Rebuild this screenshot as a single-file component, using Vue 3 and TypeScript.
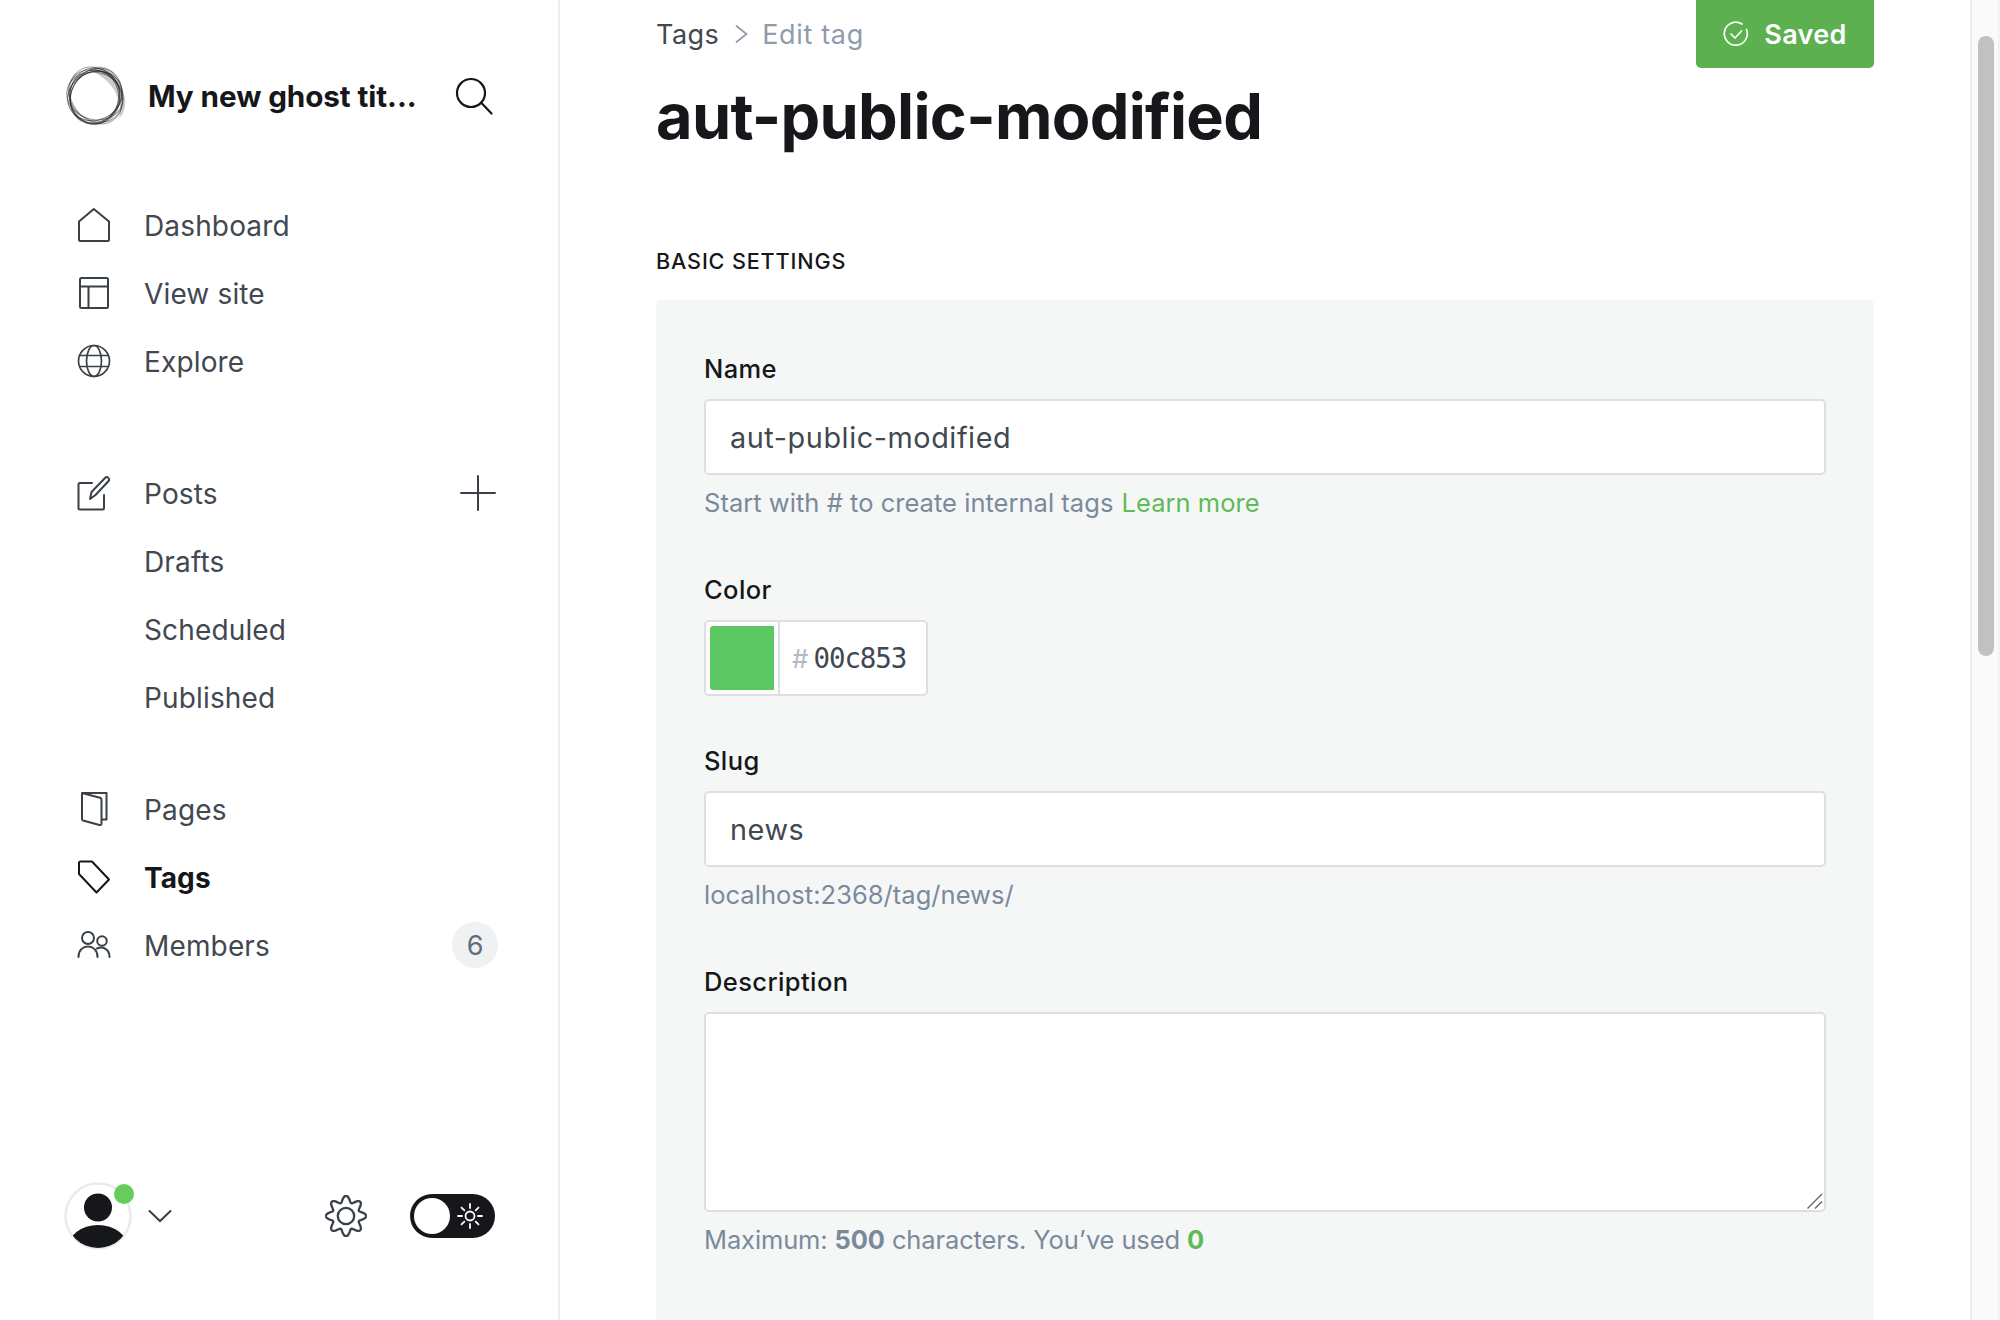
<script setup lang="ts">
interface NavItem { label: string; icon?: string; active?: boolean; plus?: boolean; badge?: string }
const groups: NavItem[][] = [
  [{ label: 'Dashboard', icon: 'home' }, { label: 'View site', icon: 'layout' }, { label: 'Explore', icon: 'globe' }],
  [{ label: 'Posts', icon: 'posts', plus: true }, { label: 'Drafts' }, { label: 'Scheduled' }, { label: 'Published' }],
  [{ label: 'Pages', icon: 'pages' }, { label: 'Tags', icon: 'tag', active: true }, { label: 'Members', icon: 'members', badge: '6' }],
]
const gearPath = (() => {
  const pts: string[] = []
  for (let i = 0; i < 160; i++) {
    const t = (i / 160) * Math.PI * 2
    const r = 16.2 + 3 * Math.cos(8 * t)
    pts.push(`${(20 + r * Math.sin(t)).toFixed(2)} ${(20 - r * Math.cos(t)).toFixed(2)}`)
  }
  return 'M' + pts.join('L') + 'Z'
})()
const rays = [0, 45, 90, 135, 180, 225, 270, 315]
const logoRings = [
  { rx: 28, ry: 24, a: -25, o: 0.6, cx: 30, cy: 31 },
  { rx: 28.5, ry: 23.5, a: 15, o: 0.5, cx: 30, cy: 31 },
  { rx: 29, ry: 24, a: 40, o: 0.45, cx: 30.5, cy: 31 },
  { rx: 30, ry: 24.5, a: 55, o: 0.4, cx: 31, cy: 30.5 },
  { rx: 29, ry: 24.5, a: -60, o: 0.5, cx: 31, cy: 31 },
  { rx: 28, ry: 25, a: 85, o: 0.55, cx: 30, cy: 31 },
  { rx: 27, ry: 24.5, a: -85, o: 0.6, cx: 29, cy: 32 },
  { rx: 26.5, ry: 24, a: 120, o: 0.65, cx: 30, cy: 32 },
]
</script>

<template>
  <div class="app">
    <aside class="sidebar">
      <header class="brand">
        <svg class="logo" width="62" height="62" viewBox="0 0 62 62" fill="none">
          <path d="M24 5C30 -1 43 1 49 8C54 14 58 22 60 34C61 43 58 50 54 53C58 40 52 16 24 5Z" fill="#a8a8a8" opacity="0.6" />
          <ellipse
            v-for="(r, i) in logoRings"
            :key="i"
            :cx="r.cx"
            :cy="r.cy"
            :rx="r.rx"
            :ry="r.ry"
            :transform="`rotate(${r.a} ${r.cx} ${r.cy})`"
            stroke="#222"
            stroke-width="1"
            :opacity="r.o"
          />
        </svg>
        <span class="brand-name">My new ghost tit...</span>
        <svg class="search" width="38" height="38" viewBox="0 0 38 38" fill="none" stroke="#15171a" stroke-width="2.2" stroke-linecap="round">
          <circle cx="16" cy="16" r="14" />
          <path d="M26.5 26L36.5 36.5" />
        </svg>
      </header>

      <nav class="nav">
        <ul v-for="(group, gi) in groups" :key="gi" class="group">
          <li v-for="item in group" :key="item.label" class="row" :class="{ active: item.active }">
            <span class="ico">
              <svg v-if="item.icon === 'home'" width="34" height="36" viewBox="0 0 34 36" fill="none" stroke="#394047" stroke-width="2" stroke-linejoin="round">
                <path d="M2 14.5L16.8 2L32 14.5V32.5A1.5 1.5 0 0 1 30.5 34H3.5A1.5 1.5 0 0 1 2 32.5Z" />
              </svg>
              <svg v-else-if="item.icon === 'layout'" width="34" height="34" viewBox="0 0 34 34" fill="none" stroke="#394047" stroke-width="2">
                <rect x="3" y="2" width="28" height="30" rx="1.5" />
                <path d="M3 10.5H31M11.5 10.5V32" />
              </svg>
              <svg v-else-if="item.icon === 'globe'" width="34" height="34" viewBox="0 0 34 34" fill="none" stroke="#394047" stroke-width="1.7">
                <circle cx="17" cy="17" r="15.5" />
                <ellipse cx="17" cy="17" rx="7.5" ry="15.5" />
                <path d="M3 11.5H31M3 22.5H31" />
              </svg>
              <svg v-else-if="item.icon === 'posts'" width="34" height="36" viewBox="0 0 34 36" fill="none" stroke="#394047" stroke-width="2" stroke-linejoin="round" stroke-linecap="round">
                <path d="M15 8H3A1.5 1.5 0 0 0 1.5 9.500V33A1.500 1.500 0 0 0 3 34.500H25.500A1.500 1.500 0 0 0 27 33V20" />
                <path d="M13 24L14.500 17L28.500 2.500C30 1 33 3.500 32 5.500L18.500 20Z" />
              </svg>
              <svg v-else-if="item.icon === 'pages'" width="34" height="36" viewBox="0 0 34 36" fill="none" stroke="#394047" stroke-width="2" stroke-linejoin="round">
                <path d="M5 2H29.500V28.500H24.500" />
                <path d="M5 2L22 6.500A2.500 2.500 0 0 1 24.500 9V32.500A1.500 1.500 0 0 1 22.500 34L6 29.500A1.500 1.500 0 0 1 5 28Z" />
              </svg>
              <svg v-else-if="item.icon === 'tag'" width="34" height="36" viewBox="0 0 34 36" fill="none" stroke="#15171a" stroke-width="2" stroke-linejoin="round">
                <path d="M2 4A1.500 1.500 0 0 1 3.500 2.500H15L32 20.500L19.500 33.500L2 15Z" />
              </svg>
              <svg v-else-if="item.icon === 'members'" width="34" height="30" viewBox="0 0 34 30" fill="none" stroke="#394047" stroke-width="2" stroke-linecap="round">
                <circle cx="11" cy="8" r="6" />
                <path d="M1.500 27C1.500 20 6 16.500 11 16.500C16 16.500 20.500 20 20.500 27" />
                <circle cx="25" cy="11" r="4.800" />
                <path d="M20 18.500C26 16 32.500 19 32.500 27" />
              </svg>
            </span>
            <span class="label">{{ item.label }}</span>
            <svg v-if="item.plus" class="plus" width="36" height="36" viewBox="0 0 36 36" stroke="#394047" stroke-width="2" stroke-linecap="round">
              <path d="M18 1V35M1 18H35" />
            </svg>
            <span v-if="item.badge" class="badge">{{ item.badge }}</span>
          </li>
        </ul>
      </nav>

      <footer class="foot">
        <span class="avatar">
          <svg width="68" height="68" viewBox="0 0 68 68">
            <defs>
              <clipPath id="avClip"><circle cx="34" cy="34" r="32" /></clipPath>
            </defs>
            <circle cx="34" cy="34" r="32.500" fill="#fff" stroke="#e9ebed" stroke-width="2.500" />
            <circle cx="34" cy="25.500" r="14" fill="#15171a" />
            <ellipse cx="34" cy="66" rx="30" ry="23" fill="#15171a" clip-path="url(#avClip)" />
          </svg>
          <i class="dot"></i>
        </span>
        <svg class="caret" width="24" height="14" viewBox="0 0 24 14" fill="none" stroke="#394047" stroke-width="2" stroke-linecap="round">
          <path d="M1.500 2L12 12L22.500 2" />
        </svg>
        <svg class="gear" width="42" height="42" viewBox="0 0 40 40" fill="none" stroke="#394047" stroke-width="2.200">
          <path :d="gearPath" />
          <circle cx="20" cy="20" r="7.800" />
        </svg>
        <span class="toggle">
          <i class="knob"></i>
          <svg width="28" height="28" viewBox="0 0 28 28" fill="none" stroke="#fff" stroke-width="1.800" stroke-linecap="round">
            <circle cx="14" cy="14" r="4.500" />
            <path v-for="a in rays" :key="a" d="M14 6V2" :transform="`rotate(${a} 14 14)`" />
          </svg>
        </span>
      </footer>
    </aside>

    <main class="main">
      <div class="top">
        <div class="crumbs">
          <span class="crumb-link">Tags</span>
          <svg width="13" height="24" viewBox="0 0 13 24" fill="none" stroke="#8e9cac" stroke-width="1.800" stroke-linecap="round">
            <path d="M1.500 4L11.500 12L1.500 20" />
          </svg>
          <span class="crumb-now">Edit tag</span>
        </div>
        <button class="saved" type="button">
          <svg width="26" height="26" viewBox="0 0 26 26" fill="none" stroke="#fff" stroke-width="1.700" stroke-linecap="round" stroke-linejoin="round">
            <path d="M23.500 8.500A11.500 11.500 0 1 1 19 3" />
            <path d="M8 13L12 17L18.500 10" />
          </svg>
          <span>Saved</span>
        </button>
      </div>

      <h1 class="title">aut-public-modified</h1>
      <h2 class="section">BASIC SETTINGS</h2>

      <section class="panel">
        <label class="lbl first">Name</label>
        <input class="field" type="text" value="aut-public-modified" />
        <p class="help">Start with # to create internal tags <a class="link">Learn more</a></p>

        <label class="lbl color-lbl">Color</label>
        <div class="color">
          <span class="swatch-wrap"><i class="swatch"></i></span>
          <span class="hex"><span class="hash">#</span><span class="code">00c853</span></span>
        </div>

        <label class="lbl slug-lbl">Slug</label>
        <input class="field" type="text" value="news" />
        <p class="help">localhost:2368/tag/news/</p>

        <label class="lbl color-lbl">Description</label>
        <div class="area-wrap">
          <textarea class="area"></textarea>
          <svg class="grip" width="18" height="18" viewBox="0 0 18 18" stroke="#666" stroke-width="1.400">
            <path d="M1.500 16.500L16 2M9 16.500L16 9.500" />
          </svg>
        </div>
        <p class="help max">Maximum: <b>500</b> characters. You’ve used <b class="used">0</b></p>
      </section>
    </main>

    <div class="scrollbar"><i class="thumb"></i></div>
  </div>
</template>

<style>
html, body { margin: 0; background: #fff; overflow: hidden; }
</style>

<style scoped>
.app {
  display: flex;
  width: 2000px;
  height: 1320px;
  overflow: hidden;
  background: #fff;
  font-family: Inter, "Liberation Sans", sans-serif;
  color: #15171a;
}
.sidebar {
  box-sizing: border-box;
  flex: none;
  width: 560px;
  height: 1320px;
  border-right: 2px solid #edeeef;
  display: flex;
  flex-direction: column;
  padding-top: 65px;
}
.brand {
  display: flex;
  align-items: center;
  height: 62px;
  padding-left: 65px;
}
.logo { flex: none; overflow: visible; }
.brand-name {
  margin-left: 21px;
  font-size: 29.700px;
  font-weight: 700;
  white-space: nowrap;
  letter-spacing: -0.1px;
}
.search { margin-left: 38px; flex: none; }
.nav { margin-top: 64px; }
.group { list-style: none; margin: 0 0 44px; padding: 0; }
.group:first-child { margin-bottom: 64px; }
.row {
  display: flex;
  align-items: center;
  height: 68px;
  padding-left: 77px;
  font-size: 28px;
  letter-spacing: 0.15px;
  color: #414850;
}
.label { padding-top: 1px; }
.row.active { color: #15171a; font-weight: 700; letter-spacing: 0.1px; }
.ico { width: 34px; flex: none; display: flex; justify-content: center; margin-right: 33px; }
.plus { margin-left: auto; margin-right: 62px; }
.badge {
  margin-left: auto;
  margin-right: 60px;
  width: 46px;
  height: 46px;
  border-radius: 50%;
  background: #eff1f3;
  color: #626d79;
  font-size: 27px;
  display: flex;
  align-items: center;
  justify-content: center;
  letter-spacing: 0;
}
.foot {
  margin-top: auto;
  display: flex;
  align-items: center;
  height: 68px;
  padding: 0 0 70px 64px;
}
.avatar { position: relative; width: 68px; height: 68px; flex: none; }
.avatar svg { display: block; }
.dot {
  position: absolute;
  left: 50px;
  top: 2px;
  width: 20px;
  height: 20px;
  border-radius: 50%;
  background: #66cc5c;
}
.caret { margin-left: 16px; flex: none; }
.gear { margin-left: 153px; flex: none; }
.toggle {
  margin-left: 43px;
  box-sizing: border-box;
  width: 85px;
  height: 44px;
  border-radius: 22px;
  background: #15171a;
  display: flex;
  align-items: center;
  padding-left: 4px;
  flex: none;
}
.knob { width: 36px; height: 36px; border-radius: 50%; background: #fff; flex: none; }
.toggle svg { margin-left: 6px; }

.main {
  box-sizing: border-box;
  flex: 1;
  min-width: 0;
  height: 1320px;
  padding: 0 96px;
}
.top { display: flex; justify-content: space-between; align-items: flex-end; height: 68px; }
.crumbs {
  display: flex;
  align-items: center;
  gap: 16px;
  height: 68px;
  font-size: 27px;
  letter-spacing: 0.45px;
}
.crumb-link { color: #414850; }
.crumb-now { color: #8e9cac; margin-left: -2px; letter-spacing: 0.65px; }
.saved {
  box-sizing: border-box;
  width: 178px;
  height: 76px;
  flex: none;
  border: 0;
  border-radius: 5px;
  background: #5cb050;
  color: #fff;
  font: 600 27px Inter, "Liberation Sans", sans-serif;
  letter-spacing: 0.3px;
  display: flex;
  align-items: center;
  justify-content: center;
  gap: 15px;
  padding: 8px 0 0;
}
.title {
  margin: 12px 0 0;
  font-size: 63px;
  line-height: 72px;
  font-weight: 700;
  letter-spacing: -0.7px;
}
.section {
  margin: 92px 0 0;
  font-size: 21.600px;
  line-height: 34px;
  font-weight: 450;
  letter-spacing: 0.85px;
}
.panel {
  box-sizing: border-box;
  margin-top: 22px;
  height: 1100px;
  padding: 0 48px;
  background: #f5f7f7;
  border-radius: 5px;
  overflow: hidden;
}
.lbl {
  display: block;
  font-size: 25.500px;
  line-height: 34px;
  font-weight: 500;
  letter-spacing: 0.4px;
  color: #15171a;
}
.first { margin-top: 52px; }
.color-lbl { margin-top: 53px; }
.slug-lbl { margin-top: 48px; }
.field, .area {
  box-sizing: border-box;
  display: block;
  width: 100%;
  border: 2px solid #dddfe0;
  border-radius: 5px;
  background: #fff;
  outline: 0;
  padding: 0 24px;
  font: 400 28.800px Inter, "Liberation Sans", sans-serif;
  letter-spacing: 0.57px;
  color: #414850;
}
.field { height: 76px; margin-top: 13px; }
.area-wrap { position: relative; margin-top: 13px; }
.area { height: 200px; resize: none; }
.grip { position: absolute; right: 2px; bottom: 2px; }
.help {
  margin: 11px 0 0;
  font-size: 25.500px;
  line-height: 34px;
  letter-spacing: 0.03px;
  color: #7b8a9b;
}
.link { color: #5fbb54; margin-left: 1px; }
.color {
  box-sizing: border-box;
  display: flex;
  width: 224px;
  height: 76px;
  margin-top: 13px;
  border: 2px solid #dddfe0;
  border-radius: 5px;
  background: #fff;
}
.swatch-wrap {
  box-sizing: border-box;
  width: 74px;
  flex: none;
  padding: 4px;
  border-right: 2px solid #dddfe0;
}
.swatch { display: block; width: 64px; height: 64px; background: #5bc864; border-radius: 3px 0 0 3px; }
.hex { display: flex; align-items: center; padding-left: 12px; gap: 5px; }
.hash { color: #b0b9c4; font: 400 26px Inter, "Liberation Sans", sans-serif; }
.code { font: 400 27.500px "DejaVu Sans Mono", "Liberation Mono", monospace; color: #414850; letter-spacing: -1.100px; }
.max { margin-top: 11px; letter-spacing: -0.13px; }
.max b { font-weight: 700; }
.used { color: #5fbb54; }

.scrollbar {
  box-sizing: border-box;
  flex: none;
  width: 30px;
  height: 1320px;
  background: #fafafa;
  border-left: 2px solid #ececec;
  border-right: 2px solid #f2f2f2;
  padding: 36px 4px 0 6px;
}
.thumb { display: block; width: 16px; height: 620px; border-radius: 8px; background: #c1c1c1; }
</style>
